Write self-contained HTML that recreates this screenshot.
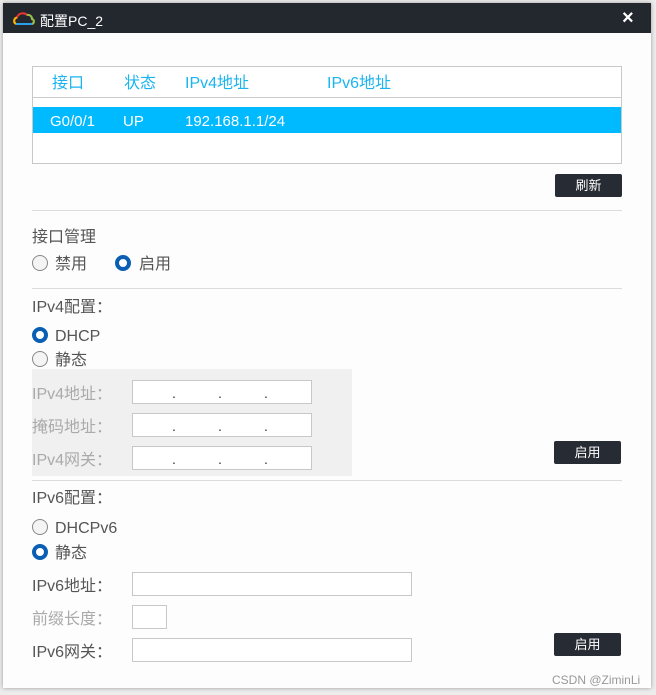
<!DOCTYPE html>
<html><head><meta charset="utf-8"><style>
*{margin:0;padding:0;box-sizing:border-box}
body{width:656px;height:695px;overflow:hidden;background:#ececec;position:relative;font-family:"Liberation Sans","Noto Sans CJK SC",sans-serif;}
.a{position:absolute}
.win{left:3px;top:3px;width:648px;height:685px;background:#fdfdfd;box-shadow:0 0 4px rgba(0,0,0,.35)}
.title{left:3px;top:3px;width:648px;height:30px;background:#23272e;color:#fff;font-size:14px}
.t{font-size:16px;color:#555;line-height:20px;white-space:nowrap;margin-top:2px}
.hd{font-size:16px;color:#1ab4f0;line-height:20px;margin-top:2px}
.btn{background:#272b33;color:#fff;font-size:13px;text-align:center;line-height:23px;border-radius:2px;width:67px;height:23px}
.hr{height:1px;background:#dcdcdc;left:32px;width:590px}
.r{width:16px;height:16px;border-radius:50%;border:1px solid #888;background:#f4f4f4}
.r.on{border:4px solid #0a5fb4;background:#fff}
.in{background:#fff;border:1px solid #c8c8c8;height:24px}
.dot{font-size:14px;color:#333;margin-top:1px}
.g{color:#aaa}
.rw{color:#fff;font-size:15px;margin-top:2px}
</style></head><body>
<div class="a win"></div>
<div class="a title">
<svg class="a" style="left:10px;top:8px" width="22" height="15" viewBox="0 0 22 15"><path d="M3 13 A3.5 3.5 0 0 1 4 6.5 A6 6 0 0 1 14 4 A4 4 0 0 1 19 8 A2.6 2.6 0 0 1 19 13" fill="none" stroke="#e33" stroke-width="2"/><path d="M3 13 A3.5 3.5 0 0 1 4 6.5" fill="none" stroke="#f5b800" stroke-width="2"/><path d="M14 4 A4 4 0 0 1 19 8 A2.6 2.6 0 0 1 19 13" fill="none" stroke="#8bc34a" stroke-width="2"/><path d="M3 13 H19" stroke="#2aa0e8" stroke-width="2"/></svg>
<div class="a" style="left:37px;top:8px;font-size:14px">配置PC_2</div>
<div class="a" style="left:619px;top:4px;font-size:20px;font-weight:bold">×</div>
</div>
<div class="a" style="left:32px;top:66px;width:590px;height:98px;border:1px solid #c8c8c8;background:#fff"></div>
<div class="a" style="left:33px;top:97px;width:588px;height:1px;background:#ccc"></div>
<div class="a hd" style="left:52px;top:72px">接口</div>
<div class="a hd" style="left:124px;top:72px">状态</div>
<div class="a hd" style="left:185px;top:72px">IPv4地址</div>
<div class="a hd" style="left:327px;top:72px">IPv6地址</div>
<div class="a" style="left:33px;top:107px;width:588px;height:26px;background:#00baff"></div>
<div class="a rw" style="left:50px;top:111px">G0/0/1</div>
<div class="a rw" style="left:123px;top:111px">UP</div>
<div class="a rw" style="left:185px;top:111px">192.168.1.1/24</div>
<div class="a btn" style="left:555px;top:174px">刷新</div>
<div class="a hr" style="top:210px"></div>
<div class="a t" style="left:32px;top:226px">接口管理</div>
<div class="a r" style="left:32px;top:255px"></div><div class="a t" style="left:55px;top:253px">禁用</div>
<div class="a r on" style="left:115px;top:255px"></div><div class="a t" style="left:139px;top:253px">启用</div>
<div class="a hr" style="top:288px"></div>
<div class="a t" style="left:32px;top:296px">IPv4配置：</div>
<div class="a r on" style="left:32px;top:327px"></div><div class="a t" style="left:55px;top:325px">DHCP</div>
<div class="a r" style="left:32px;top:351px"></div><div class="a t" style="left:55px;top:349px">静态</div>
<div class="a" style="left:32px;top:369px;width:320px;height:107px;background:#f0f0f0"></div>
<div class="a t g" style="left:32px;top:383px">IPv4地址：</div>
<div class="a t g" style="left:32px;top:416px">掩码地址：</div>
<div class="a t g" style="left:32px;top:449px">IPv4网关：</div>
<div class="a in" style="left:132px;top:380px;width:180px"></div>
<div class="a in" style="left:132px;top:413px;width:180px"></div>
<div class="a in" style="left:132px;top:446px;width:180px"></div>
<div class="a dot" style="left:172px;top:384px">.</div><div class="a dot" style="left:218px;top:384px">.</div><div class="a dot" style="left:264px;top:384px">.</div>
<div class="a dot" style="left:172px;top:417px">.</div><div class="a dot" style="left:218px;top:417px">.</div><div class="a dot" style="left:264px;top:417px">.</div>
<div class="a dot" style="left:172px;top:450px">.</div><div class="a dot" style="left:218px;top:450px">.</div><div class="a dot" style="left:264px;top:450px">.</div>
<div class="a btn" style="left:554px;top:441px">启用</div>
<div class="a hr" style="top:480px"></div>
<div class="a t" style="left:32px;top:487px">IPv6配置：</div>
<div class="a r" style="left:32px;top:519px"></div><div class="a t" style="left:55px;top:517px">DHCPv6</div>
<div class="a r on" style="left:32px;top:544px"></div><div class="a t" style="left:55px;top:542px">静态</div>
<div class="a t" style="left:32px;top:575px">IPv6地址：</div>
<div class="a t g" style="left:32px;top:608px">前缀长度：</div>
<div class="a t" style="left:32px;top:641px">IPv6网关：</div>
<div class="a in" style="left:132px;top:572px;width:280px"></div>
<div class="a in" style="left:132px;top:605px;width:35px"></div>
<div class="a in" style="left:132px;top:638px;width:280px"></div>
<div class="a btn" style="left:554px;top:633px">启用</div>
<div class="a" style="left:552px;top:673px;font-size:12px;color:#999">CSDN @ZiminLi</div>
</body></html>
